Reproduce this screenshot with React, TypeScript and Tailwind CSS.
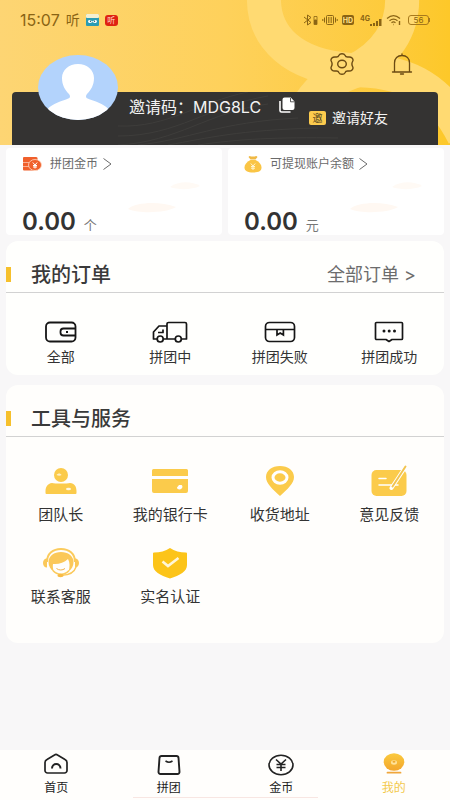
import type { ReactNode } from 'react';

interface IconItem {
    label: string;
    icon: ReactNode;
}

const HeaderSwoosh = () => (
    <svg className="absolute inset-0 h-full w-full" viewBox="0 0 450 145" preserveAspectRatio="xMaxYMin slice" fill="none" aria-hidden="true">
        <g stroke="#ffda72" strokeWidth="34">
            <path d="M264 -5C262 38 294 66 350 70C402 70 438 84 464 136"/>
            <path d="M402 -5C404 28 386 56 352 72C326 82 316 92 306 110"/>
        </g>
    </svg>
);

const StatusBar = () => (
    <div className="relative flex h-10 items-center justify-between pl-5 pr-5 text-[#8a6414]">
        <div className="flex items-center">
            <span className="text-base leading-5">15:07</span>
            <span className="ml-1.5 text-sm leading-5">听</span>
            <svg className="ml-1.5 h-3 w-[13px]" viewBox="0 0 13 12" aria-hidden="true">
                <rect width="13" height="12" rx="1" fill="#2a9cb4"/>
                <rect width="13" height="4" rx="1" fill="#f3efd2"/>
                <path d="M2 7c1-2 3-1 4.500 0.500C8 6 10 5 11 7c0 2-2 3-4.500 1C4 10 2 9 2 7z" fill="#fff"/>
                <circle cx="4.500" cy="7.300" r=".7" fill="#20606c"/>
                <circle cx="8.500" cy="7.300" r=".7" fill="#20606c"/>
            </svg>
            <span className="ml-1.5 flex h-[11px] w-[13px] items-center justify-center rounded-[3px] bg-[#df2212] text-[8px] leading-none text-[#ffd9c8]">听</span>
        </div>
        <div className="flex items-center gap-1">
            <svg className="h-3 w-[15px]" viewBox="0 0 15 12" fill="none" stroke="currentColor" aria-hidden="true">
                <path d="M1 3l7 5.500L4.500 11V1L8 3.500 1 9"/>
                <path d="M11 2.500h3v8h-3z" strokeWidth=".8"/>
                <path d="M11.500 6h2v4h-2z" fill="currentColor"/>
            </svg>
            <svg className="h-3 w-4" viewBox="0 0 16 12" fill="none" stroke="currentColor" aria-hidden="true">
                <rect x="4.500" y="1.500" width="7" height="9" rx="1"/>
                <path d="M6.500 3v6M8 3v6M9.500 3v6" strokeWidth=".7"/>
                <path d="M2.500 3.500v5M.8 5v2M13.500 3.500v5M15.200 5v2"/>
            </svg>
            <span className="flex h-[10px] w-3 items-center justify-center rounded-[2px] bg-[#8a6414] text-[7px] font-bold leading-none text-[#ffe08a]">HD</span>
            <span className="flex items-end pl-0.5">
                <span className="mb-1 text-[7px] font-bold leading-none">4G</span>
                <svg className="h-2 w-3" viewBox="0 0 12 8" fill="currentColor" aria-hidden="true">
                    <path d="M0 6h2v2H0zM3 5h2v3H3zM6 3h2v5H6zM9 1h2.500v7H9z"/>
                </svg>
            </span>
            <svg className="h-3 w-4" viewBox="0 0 16 12" fill="none" stroke="currentColor" strokeWidth="1.200" aria-hidden="true">
                <path d="M1 4.500c4-3.500 9-3.500 13 0M3.500 6.700c2.500-2 5.500-2 8 0M5.500 8.700c1.300-1 2.700-1 4 0"/>
                <path d="M7.500 10.500h.5M13.500 7v4" strokeWidth="1.400"/>
            </svg>
            <span className="ml-0.5 flex items-center">
                <span className="flex h-[10px] w-[21px] items-center justify-center rounded-[3px] border border-[#a87a1c] text-[8px] leading-none">56</span>
                <span className="h-1 w-px bg-[#a87a1c]"/>
            </span>
        </div>
    </div>
);

const Avatar = () => (
    <svg className="absolute -top-[37px] left-[26px] h-[65px] w-20" viewBox="0 0 80 65" role="img" aria-label="头像">
        <defs>
            <clipPath id="avatar-clip">
                <ellipse cx="40" cy="32.500" rx="40" ry="32.500"/>
            </clipPath>
        </defs>
        <g clipPath="url(#avatar-clip)">
            <rect width="80" height="65" fill="#b3d3fc"/>
            <path d="M40 9c-9 0-16 6-16 14 0 7 3 12 7 16 2 3 1 4-3 5.500C20 47 12 50 8 56v12h64V56c-4-6-12-9-20-11.500-4-1.500-5-2.500-3-5.500 4-4 7-9 7-16 0-8-7-14-16-14z" fill="#fff"/>
        </g>
    </svg>
);

const Header = () => (
    <header className="relative overflow-hidden bg-linear-to-r from-[#fdd573] via-[#fed15b] to-[#fdc829]">
        <HeaderSwoosh/>
        <StatusBar/>
        <div className="relative flex h-[52px] items-start justify-end gap-9 pr-9 pt-3 text-[#6b4a12]">
            <button type="button" aria-label="设置">
                <svg className="h-6 w-6" viewBox="0 0 24 24" fill="none" stroke="currentColor" strokeWidth="1.400" strokeLinejoin="round">
                    <path d="M9 3.300C10 1.200 14 1.200 15 3.300C15.600 4.900 16.600 5.300 18.300 5C21.600 4.500 23.600 7 22.800 9C21.600 11 21.600 13 22.800 15C23.600 17 21.600 19.500 18.300 19C16.600 18.700 15.600 19.100 15 20.700C14 22.800 10 22.800 9 20.700C8.400 19.100 7.400 18.700 5.700 19C2.400 19.500 .4 17 1.200 15C2.400 13 2.400 11 1.200 9C.4 7 2.400 4.500 5.700 5C7.400 5.300 8.400 4.900 9 3.300Z"/>
                    <ellipse cx="12" cy="12" rx="4.300" ry="3.700"/>
                </svg>
            </button>
            <button type="button" aria-label="消息">
                <svg className="h-6 w-6" viewBox="0 0 24 24" fill="none" stroke="currentColor" strokeWidth="1.300" strokeLinecap="round" strokeLinejoin="round">
                    <path d="M4.500 20V11C4.500 6.500 7.500 3.500 12 3.500s7.500 3 7.500 7.500v9M2.500 20h19M12 3.500V2M10.500 22h3"/>
                </svg>
            </button>
        </div>
        <div className="relative mx-3 flex h-[53px] items-start rounded-t bg-[#343332] pl-[117px] text-[#f3f3f3]">
            <svg className="absolute inset-y-0 right-20 h-full w-60" viewBox="0 0 240 53" fill="none" stroke="#3e3d3b" aria-hidden="true">
                <path d="M0 53C60 50 90 20 150 12M0 44C60 44 90 14 150 4M20 53C70 48 100 30 180 26M50 53C90 46 120 38 200 36M0 34C50 36 80 10 130 0M80 53c40-6 80-8 140-7"/>
            </svg>
            <Avatar/>
            <p className="relative pt-1 text-base leading-[22px] whitespace-nowrap">邀请码：<span>MDG8LC</span></p>
            <button type="button" aria-label="复制邀请码" className="relative ml-4.5 mt-[5px]">
                <svg className="h-4 w-4" viewBox="0 0 16 16">
                    <path d="M5.500 .5h6.300l3.700 4v6.500a2 2 0 0 1-2 2h-8a2 2 0 0 1-2-2V2.500a2 2 0 0 1 2-2z" fill="#fff"/>
                    <path d="M11.500 1v3.800h4" fill="none" stroke="#343332" strokeWidth=".8"/>
                    <path d="M1 4v9.500A1.500 1.500 0 0 0 2.500 15h9" fill="none" stroke="#fff" strokeWidth="1.600"/>
                </svg>
            </button>
            <a href="#invite" className="relative ml-auto mr-[50px] mt-4 flex items-center gap-1.5 text-[14px] leading-5 whitespace-nowrap">
                <span className="flex h-[14px] w-[17px] items-center justify-center rounded-[2px] bg-[#fccb4e] text-[10px] leading-none text-[#54431c]">邀</span>
                邀请好友
            </a>
        </div>
    </header>
);

const CoinIcon = () => (
    <svg className="h-[18px] w-5" viewBox="0 0 20 18" aria-hidden="true">
        <path d="M2 2h12a1.500 1.500 0 0 1 1.500 2v3H1V3a1 1 0 0 1 1-1zM1 7.500h8v3.500H1zM1 11.500h8l3 4H2a1 1 0 0 1-1-1z" fill="#f0602c"/>
        <ellipse cx="13" cy="10" rx="6.500" ry="5.500" fill="#f0602c" stroke="#ffd9c4" strokeWidth=".8"/>
        <path d="M10.800 7.500L13 10l2.200-2.500M13 10v3.500M11 10.500h4M11 12h4" stroke="#fff" fill="none"/>
    </svg>
);

const MoneyBagIcon = () => (
    <svg className="h-[18px] w-[18px]" viewBox="0 0 18 18" aria-hidden="true">
        <path d="M5.500 1c2 .8 5 .8 7 0l1 1-2 2.500h-5L4.500 2z" fill="#f0b945"/>
        <path d="M6.500 5h5c4 2 6 4.500 6 7.500 0 3.500-3 5-8.500 5s-8.500-1.500-8.500-5C.5 9.500 2.500 7 6.500 5z" fill="#fac545"/>
        <path d="M6.800 8.500L9 11l2.200-2.500M9 11v4M7 11.500h4M7 13.200h4" stroke="#fff4cf" fill="none"/>
    </svg>
);

const BalanceCard = ({ label, unit, icon }: { label: string; unit: string; icon: ReactNode }) => (
    <section className="relative flex-1 overflow-hidden rounded bg-white px-4 pb-px pt-1.5">
        <svg className="absolute bottom-0 right-2 h-14 w-24" viewBox="0 0 96 56" aria-hidden="true">
            <path d="M10 30c8-7 32-8 48-2-10 6-36 7-48 2z" fill="#fff8f2"/>
            <path d="M52 8c8-6 22-6 30-1-8 4-22 4-30 1z" fill="#fffaf5"/>
        </svg>
        <a href="#detail" className="relative flex items-center text-xs leading-5 text-[#6a6a6a]">
            {icon}
            <span className="ml-2">{label}</span>
            <svg className="ml-1 h-3 w-[10px]" viewBox="0 0 10 12" fill="none" stroke="currentColor" aria-hidden="true">
                <path d="M1.500 .5L9 6l-7.500 5.500"/>
            </svg>
        </a>
        <p className="relative mt-9 flex items-baseline gap-2 leading-6 text-[#333]">
            <span className="text-2xl leading-6 font-semibold">0.00</span>
            <span className="text-[13px] leading-4 text-[#777]">{unit}</span>
        </p>
    </section>
);

const CardTitle = ({ title, children }: { title: string; children?: ReactNode }) => (
    <div className="flex h-[52px] items-center border-b border-[#d2d2d2] pt-4">
        <span className="h-[15px] w-[5px] bg-[#f6c02c]"/>
        <h2 className="ml-5 text-xl leading-6 font-medium text-[#3a3a3a]">{title}</h2>
        {children}
    </div>
);

const orders: IconItem[] = [
    {
        label: '全部',
        icon: (
            <svg className="h-[22px] w-8" viewBox="0 0 32 22" fill="none" stroke="currentColor" strokeWidth="1.800">
                <rect x="1" y="1.500" width="29.500" height="19" rx="4"/>
                <path d="M30.500 7.500H18.500a3 3 0 0 0-3 3v1a3 3 0 0 0 3 3h12"/>
                <path d="M21 11h2"/>
            </svg>
        ),
    },
    {
        label: '拼团中',
        icon: (
            <svg className="h-[22px] w-9" viewBox="0 0 36 22" fill="none" stroke="currentColor" strokeWidth="1.700" strokeLinejoin="round">
                <path d="M5 18H1.500V11L7 5h8M11.500 18h11.500M29.500 18h5V3a1.500 1.500 0 0 0-1.500-1.500H16.500A1.500 1.500 0 0 0 15 3v15"/>
                <circle cx="8.200" cy="18" r="3"/>
                <circle cx="26.300" cy="18" r="3"/>
                <path d="M6 11.500h5V8.500"/>
            </svg>
        ),
    },
    {
        label: '拼团失败',
        icon: (
            <svg className="h-[22px] w-8" viewBox="0 0 32 22" fill="none" stroke="currentColor" strokeWidth="1.700">
                <rect x="1.500" y="1.500" width="29" height="19" rx="4"/>
                <path d="M1.500 8.500h29M13 8.500V14l3.200-2 3.200 2V8.500"/>
            </svg>
        ),
    },
    {
        label: '拼团成功',
        icon: (
            <svg className="h-[22px] w-8" viewBox="0 0 32 22" fill="none" stroke="currentColor" strokeWidth="1.700" strokeLinejoin="round">
                <path d="M3.500 1.500h25a1 1 0 0 1 1 1v15a1 1 0 0 1-1 1H19L16 20.500l-3-2H3.500a1 1 0 0 1-1-1v-15a1 1 0 0 1 1-1z"/>
                <g fill="currentColor" stroke="none">
                    <circle cx="11" cy="10" r="1.500"/>
                    <circle cx="16.200" cy="10" r="1.500"/>
                    <circle cx="21.500" cy="10" r="1.500"/>
                </g>
            </svg>
        ),
    },
];

const tools: IconItem[] = [
    {
        label: '团队长',
        icon: (
            <svg className="h-8 w-8" viewBox="0 0 32 32" fill="#fbcb4b">
                <circle cx="16" cy="10" r="7"/>
                <path d="M7 18c3 .8 15 .8 18 0 4.500.5 6.500 3.500 6.500 8V28a1 1 0 0 1-1 1h-29a1 1 0 0 1-1-1v-1.500c0-4.500 2-8 6.500-8.500z"/>
                <path d="M11.500 10c1.500-2 4-2 5 0-1.500 1.200-3.500.7-5 0z" fill="#fff0c4"/>
                <ellipse cx="23.500" cy="24" rx="2.500" ry="1.300" fill="#fff8e0"/>
            </svg>
        ),
    },
    {
        label: '我的银行卡',
        icon: (
            <svg className="h-8 w-9" viewBox="0 0 36 32" fill="#fbcb4b">
                <path d="M1.500 4h33a1.500 1.500 0 0 1 1.500 1.500V11H0V5.500A1.500 1.500 0 0 1 1.500 4zM0 14h36v12a2 2 0 0 1-2 2H2a2 2 0 0 1-2-2z"/>
                <path d="M25 22.500l2-2.500h2.500c2 1 .5 4.500-2 4.500-1.500 0-2.500-1-2.500-2z" fill="#fff"/>
            </svg>
        ),
    },
    {
        label: '收货地址',
        icon: (
            <svg className="h-8 w-8" viewBox="0 0 32 32">
                <path d="M16 1C8 1 2 5.500 2 12c0 6.500 6.500 12 14 19 7.500-7 14-12.500 14-19C30 5.500 24 1 16 1z" fill="#fbcb4b"/>
                <ellipse cx="16" cy="12.500" rx="7" ry="5.700" fill="#fbcb4b" stroke="#fff" strokeWidth="3"/>
            </svg>
        ),
    },
    {
        label: '意见反馈',
        icon: (
            <svg className="h-8 w-9" viewBox="0 0 36 32" fill="none" strokeLinecap="round">
                <rect x=".5" y="5" width="35" height="26" rx="5" fill="#fbcb4b"/>
                <path d="M8 13.500h7M8 20h19" stroke="#fff" strokeWidth="1.500"/>
                <path d="M34 2.500L20.500 23" stroke="#fff" strokeWidth="4"/>
                <path d="M34.500 1.500L21.500 21.500" stroke="#f2c450" strokeWidth="2"/>
            </svg>
        ),
    },
    {
        label: '联系客服',
        icon: (
            <svg className="h-8 w-9" viewBox="0 0 36 32" fill="none">
                <path d="M4 15C4 6.500 10 2 18 2s14 4.500 14 13" stroke="#fbcb5c" strokeWidth="2"/>
                <path d="M4 11.500v9c-2.500 0-4-2-4-4.500s1.500-4.500 4-4.500zM32 11.500v9c2.500 0 4-2 4-4.500s-1.500-4.500-4-4.500z" fill="#fbc859"/>
                <path d="M5.500 15C5.500 9 11 5 18 5S30.500 9 30.500 15c0 4-1.500 7-5 9.500 1.500-4 1.500-9-.5-12.500-4 4-9.500 5.500-15 5-.5 2 0 5 1 8C7.500 22.500 5.500 19 5.500 15z" fill="#fbc859"/>
                <path d="M10 23.500c4 5 12 5 16 0" stroke="#fbcb5c" strokeWidth="1.500"/>
                <path d="M13.500 21.500c2.500 2 6 2 8.500 0" stroke="#f0b24c"/>
                <path d="M33 20c-1.500 5-7 8-14 8.300" stroke="#fbc859" strokeWidth="1.400"/>
                <ellipse cx="17.500" cy="28.500" rx="3" ry="1.700" fill="#f8bb45"/>
            </svg>
        ),
    },
    {
        label: '实名认证',
        icon: (
            <svg className="h-8 w-9" viewBox="0 0 36 32" fill="none">
                <path d="M18 1c4.500 3 10 4.500 16 4.500a1 1 0 0 1 1 1V18c0 6.500-7 10.500-17 13.500C8 28.500 1 24.500 1 18V6.500a1 1 0 0 1 1-1C8 5.500 13.500 4 18 1z" fill="#fcc419"/>
                <path d="M10.500 14.500l5.500 4.500 10.500-8" stroke="#fff6d8" strokeWidth="2.600"/>
            </svg>
        ),
    },
];

const tabs: IconItem[] = [
    {
        label: '首页',
        icon: (
            <svg className="h-6 w-6" viewBox="0 0 24 24" fill="none" stroke="currentColor" strokeWidth="1.700" strokeLinejoin="round">
                <path d="M10.500 3L3 7.500C1.500 8.300 1 9 1 10.500V18.500A2.500 2.500 0 0 0 3.500 21h17a2.500 2.500 0 0 0 2.500-2.500V10.500c0-1.500-.5-2.200-2-3L13.500 3c-1-.7-2-.7-3 0z"/>
                <path d="M8 16.500c0-6 8.500-6 8.500 0" strokeWidth="2"/>
            </svg>
        ),
    },
    {
        label: '拼团',
        icon: (
            <svg className="h-6 w-6" viewBox="0 0 24 24" fill="none" stroke="currentColor" strokeWidth="1.900">
                <path d="M4.500 4h15a2 2 0 0 1 2 1.800l1 14a2 2 0 0 1-2 2.200H3.500a2 2 0 0 1-2-2.200l1-14A2 2 0 0 1 4.500 4z"/>
                <path d="M8.500 9c2 1.300 5 1.300 7 0" strokeWidth="1.500"/>
            </svg>
        ),
    },
    {
        label: '金币',
        icon: (
            <svg className="h-6 w-[26px]" viewBox="0 0 26 24" fill="none" stroke="currentColor" strokeWidth="1.600">
                <ellipse cx="13" cy="13" rx="12" ry="9.700"/>
                <path d="M8 7.500l5 4.500 5-4.500M13 12v7M8.500 12.500h9M8.500 15.500h9"/>
            </svg>
        ),
    },
    {
        label: '我的',
        icon: (
            <svg className="h-6 w-6" viewBox="0 0 24 24">
                <defs>
                    <linearGradient id="mine-fill" x1="0" y1="0" x2="0" y2="1">
                        <stop offset="0" stopColor="#fbca3e"/>
                        <stop offset="1" stopColor="#f3a62c"/>
                    </linearGradient>
                </defs>
                <ellipse cx="12" cy="10" rx="10.300" ry="8.700" fill="url(#mine-fill)"/>
                <ellipse cx="12" cy="10.500" rx="3" ry="2.200" fill="#ffe39b"/>
                <ellipse cx="12" cy="9.800" rx="1.500" ry="1" fill="#efa92c"/>
                <path d="M5.500 20.700h13" stroke="#f0a63c" strokeWidth="1.800" strokeLinecap="round"/>
            </svg>
        ),
    },
];

export default function App() {
    return (
        <div className="flex min-h-screen flex-col bg-[#f8f7f8] font-[Inter,'Noto_Sans_CJK_SC',sans-serif]">
            <Header/>

            <main className="px-1.5 pb-6 pt-[3px]">
                <div className="flex gap-1.5">
                    <BalanceCard label="拼团金币" unit="个" icon={<CoinIcon/>}/>
                    <BalanceCard label="可提现账户余额" unit="元" icon={<MoneyBagIcon/>}/>
                </div>

                {/* Orders */}
                <section className="mt-1.5 rounded-xl bg-[#fffffd]">
                    <CardTitle title="我的订单">
                        <a href="#orders" className="ml-auto mr-7 text-lg leading-6 text-[#6c6c6c]">全部订单 &gt;</a>
                    </CardTitle>
                    <div className="grid grid-cols-4 pb-2 pt-7">
                        {orders.map((item) => (
                            <a key={item.label} href="#orders" className="flex flex-col items-center gap-1 text-[#161616]">
                                {item.icon}
                                <span className="text-sm leading-5 text-[#333]">{item.label}</span>
                            </a>
                        ))}
                    </div>
                </section>

                {/* Tools and services */}
                <section className="mt-2.5 rounded-xl bg-[#fffefc]">
                    <CardTitle title="工具与服务"/>
                    <div className="grid grid-cols-4 gap-y-[22px] pb-9 pt-7">
                        {tools.map((item) => (
                            <a key={item.label} href="#tools" className="flex flex-col items-center gap-2">
                                {item.icon}
                                <span className="text-[15px] leading-5 text-[#333]">{item.label}</span>
                            </a>
                        ))}
                    </div>
                </section>
            </main>

            <nav className="relative mt-auto grid grid-cols-4 bg-[#fffefc] pb-1 pt-0.5">
                {tabs.map((tab) => (
                    <a
                        key={tab.label}
                        href="#tab"
                        className={`flex flex-col items-center gap-1 text-xs leading-4 ${tab.label === '我的' ? 'text-[#f3c94a]' : 'text-[#222]'}`}
                    >
                        {tab.icon}
                        {tab.label}
                    </a>
                ))}
                {/* System gesture bar */}
                <span className="absolute inset-x-1/4 bottom-0.5 mx-5 h-px bg-[#f8e6e2]"/>
            </nav>
        </div>
    );
}
